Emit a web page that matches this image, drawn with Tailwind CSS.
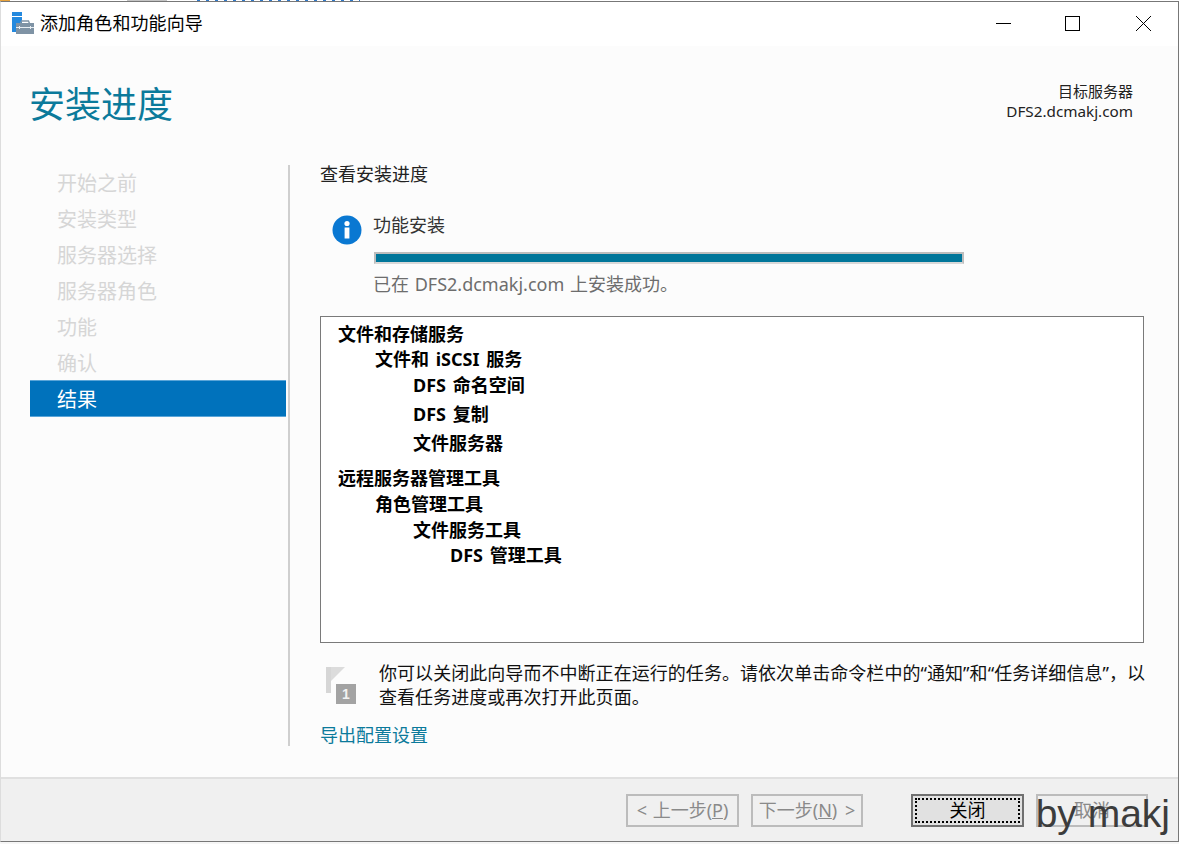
<!doctype html>
<html>

<head>
    <meta charset="UTF-8">
    <meta name="viewport" content="width=device-width, initial-scale=1.0">
    <script src="https://cdn.jsdelivr.net/npm/@tailwindcss/browser@4"></script>
</head>

<body class="bg-white font-['Noto_Sans','Noto_Sans_CJK_SC',sans-serif] text-black overflow-hidden">
    <div class="w-[1179px] h-[844px] flex flex-col">
        <!-- top edge of what is behind the window -->
        <div class="h-[1px] bg-white flex shrink-0">
            <div class="w-[10px] bg-[#e8a33d]"></div>
            <div class="ml-[117px] w-[40px] bg-[#c4c4c4]"></div>
            <div class="ml-[30px] w-[163px] bg-[repeating-linear-gradient(90deg,#2f78c8_0,#2f78c8_3px,transparent_3px,transparent_9px)]"></div>
        </div>

        <div class="relative flex-1 flex flex-col border-t border-r border-b border-[#777777] border-l-[#dddddd] border-l min-h-0">
            <header class="h-[44px] bg-white flex items-center shrink-0">
                <svg class="ml-[10px]" width="24" height="24" viewBox="0 0 24 24">
                    <rect x="1" y="0" width="10" height="4" fill="#2489de" />
                    <rect x="1" y="5" width="10" height="7" fill="#2489de" />
                    <rect x="1" y="12" width="4" height="8" fill="#2489de" />
                    <path d="M9.5 11.5l1-2.5h7l1 2.5" stroke="#7f93a5" stroke-width="1.4" fill="none" />
                    <rect x="5" y="11" width="18" height="11" fill="#7f93a5" />
                    <rect x="5" y="15" width="18" height="1" fill="#e8eef3" />
                    <rect x="8" y="14" width="1" height="3" fill="#e8eef3" />
                    <rect x="19" y="14" width="1" height="3" fill="#e8eef3" />
                </svg>
                <span class="ml-[5px] pb-[2px] text-[18px] leading-none tracking-[0.1px]">添加角色和功能向导</span>
                <div class="ml-auto flex items-center">
                    <svg width="70" height="44" viewBox="0 0 70 44"><path d="M18 21.5h15" stroke="#000" fill="none" /></svg>
                    <svg width="71" height="44" viewBox="0 0 71 44"><rect x="17.5" y="14.5" width="14" height="14" stroke="#000" fill="none" /></svg>
                    <svg width="59" height="44" viewBox="0 0 59 44"><path d="M17 14l15 15M32 14L17 29" stroke="#000" fill="none" /></svg>
                </div>
            </header>

            <main class="flex-1 bg-[#fcfcfc] flex flex-col min-h-0">
                <div class="h-[118px] flex justify-between shrink-0 pl-[28px] pr-[45px]">
                    <h1 class="mt-[35px] text-[36px] leading-[48px] font-normal text-[#0b7a9b]">安装进度</h1>
                    <div class="mt-[35px] text-right text-[15px] leading-[20px] text-[#222222]">
                        <div>目标服务器</div>
                        <div class="text-[15.25px]">DFS2.dcmakj.com</div>
                    </div>
                </div>

                <div class="flex items-start">
                    <nav class="w-[258px] ml-[29px] flex flex-col text-[20px] text-[#d6d6d6]">
                        <div class="h-[36px] pl-[27px] pt-[3px] flex items-center">开始之前</div>
                        <div class="h-[36px] pl-[27px] pt-[3px] flex items-center">安装类型</div>
                        <div class="h-[36px] pl-[27px] pt-[3px] flex items-center">服务器选择</div>
                        <div class="h-[36px] pl-[27px] pt-[3px] flex items-center">服务器角色</div>
                        <div class="h-[36px] pl-[27px] pt-[3px] flex items-center">功能</div>
                        <div class="h-[36px] pl-[27px] pt-[3px] flex items-center">确认</div>
                        <div class="h-[37px] w-[256px] pl-[27px] pt-[2px] flex items-center bg-[#0072bc] border-y border-[#5aa5d8] text-white">结果</div>
                    </nav>

                    <section class="mt-[1px] w-[855px] h-[581px] border-l-2 border-[#cfcfcf] pl-[30px] flex flex-col">
                        <p class="mt-[-3px] text-[18px] leading-[24px] text-[#222222]">查看安装进度</p>

                        <div class="mt-[27px] ml-[12px] flex h-[32px] shrink-0">
                            <svg class="mt-[2px]" width="30" height="30" viewBox="0 0 30 30">
                                <circle cx="15" cy="15" r="14.5" fill="#0a78d2" />
                                <circle cx="15" cy="8.5" r="2.6" fill="#fff" />
                                <rect x="12.6" y="12.5" width="4.8" height="11" fill="#fff" />
                            </svg>
                            <span class="ml-[11px] text-[18px] leading-[24px] text-[#333333]">功能安装</span>
                        </div>

                        <div class="mt-[7px] ml-[54px] w-[590px] h-[12px] shrink-0 bg-[#00769a] border-2 border-[#bdbdbd] border-b-[#d8d8d8]"></div>
                        <p class="mt-[7px] ml-[53px] text-[18px] leading-[26px] text-[#6d6d6d] [word-spacing:1px]">已在 DFS2.dcmakj.com 上安装成功。</p>

                        <div class="mt-[19px] w-[824px] h-[327px] shrink-0 border border-[#7a7a7a] bg-white pl-[17px] pt-[5px] text-[18px] font-bold text-black [word-spacing:2px]">
                            <div class="h-[24px] leading-[25px]">文件和存储服务</div>
                            <div class="h-[26px] leading-[26px] pl-[37px]">文件和 iSCSI 服务</div>
                            <div class="h-[26px] leading-[26px] pl-[75px]">DFS 命名空间</div>
                            <div class="h-[29px] leading-[32px] pl-[75px]">DFS 复制</div>
                            <div class="h-[29px] leading-[32px] pl-[75px]">文件服务器</div>
                            <div class="h-[41px] leading-[41px] -mt-[6px] pt-[8px]">远程服务器管理工具</div>
                            <div class="h-[26px] leading-[26px] pl-[37px]">角色管理工具</div>
                            <div class="h-[26px] leading-[26px] pl-[75px]">文件服务工具</div>
                            <div class="h-[25px] leading-[25px] pl-[112px]">DFS 管理工具</div>
                        </div>

                        <div class="mt-[18px] flex shrink-0">
                            <svg class="ml-[5px] mt-[6px] shrink-0" width="32" height="38" viewBox="0 0 32 38">
                                <rect x="1" y="0" width="5" height="26" fill="#d6d6d6" />
                                <path d="M6 0h14L6 14z" fill="#dcdcdc" />
                                <rect x="11" y="17" width="20" height="20" fill="#a3a3a3" />
                                <text x="21" y="32" text-anchor="middle" fill="#f2f2f2" font-size="14" font-weight="700" font-family="Liberation Sans">1</text>
                            </svg>
                            <p class="ml-[22px] whitespace-nowrap text-[18px] leading-[24px] text-[#111111] tracking-[0.05px]">你可以关闭此向导而不中断正在运行的任务。请依次单击命令栏中的“通知”和“任务详细信息”，以<br>查看任务进度或再次打开此页面。</p>
                        </div>

                        <a class="mt-[14px] text-[18px] leading-[24px] text-[#0b7a9b]">导出配置设置</a>
                    </section>
                </div>
            </main>

            <footer class="h-[64px] shrink-0 bg-[#f0f0f0] border-t-2 border-[#e0e0e0] flex items-start pt-[15px] pl-[625px] text-[18px] leading-none">
                <button class="w-[113px] h-[33px] pb-[2px] border-2 border-[#bcbcbc] text-[#8a8a8a] [word-spacing:1px]">&lt; 上一步(<u>P</u>)</button>
                <button class="ml-[12px] w-[112px] h-[33px] pb-[2px] border-2 border-[#bcbcbc] text-[#8a8a8a] [word-spacing:3px]">下一步(<u>N</u>) &gt;</button>
                <button class="ml-[48px] w-[113px] h-[33px] border-2 border-[#707070] bg-[#e1e1e1] p-[2px] text-black">
                    <span class="flex items-center justify-center w-full h-full pb-[2px] border-2 border-dotted border-black">关闭</span>
                </button>
                <button class="ml-[12px] w-[112px] h-[33px] pb-[2px] border-2 border-[#bcbcbc] text-[#8a8a8a]">取消</button>
            </footer>

            <span class="absolute right-[8px] bottom-[2px] text-[39px] leading-[50px] font-['Liberation_Sans',sans-serif] text-[#3c3c3c]">by makj</span>
        </div>
        <div class="h-[2px] shrink-0 bg-[#f6f6f6]"></div>
    </div>
</body>

</html>
